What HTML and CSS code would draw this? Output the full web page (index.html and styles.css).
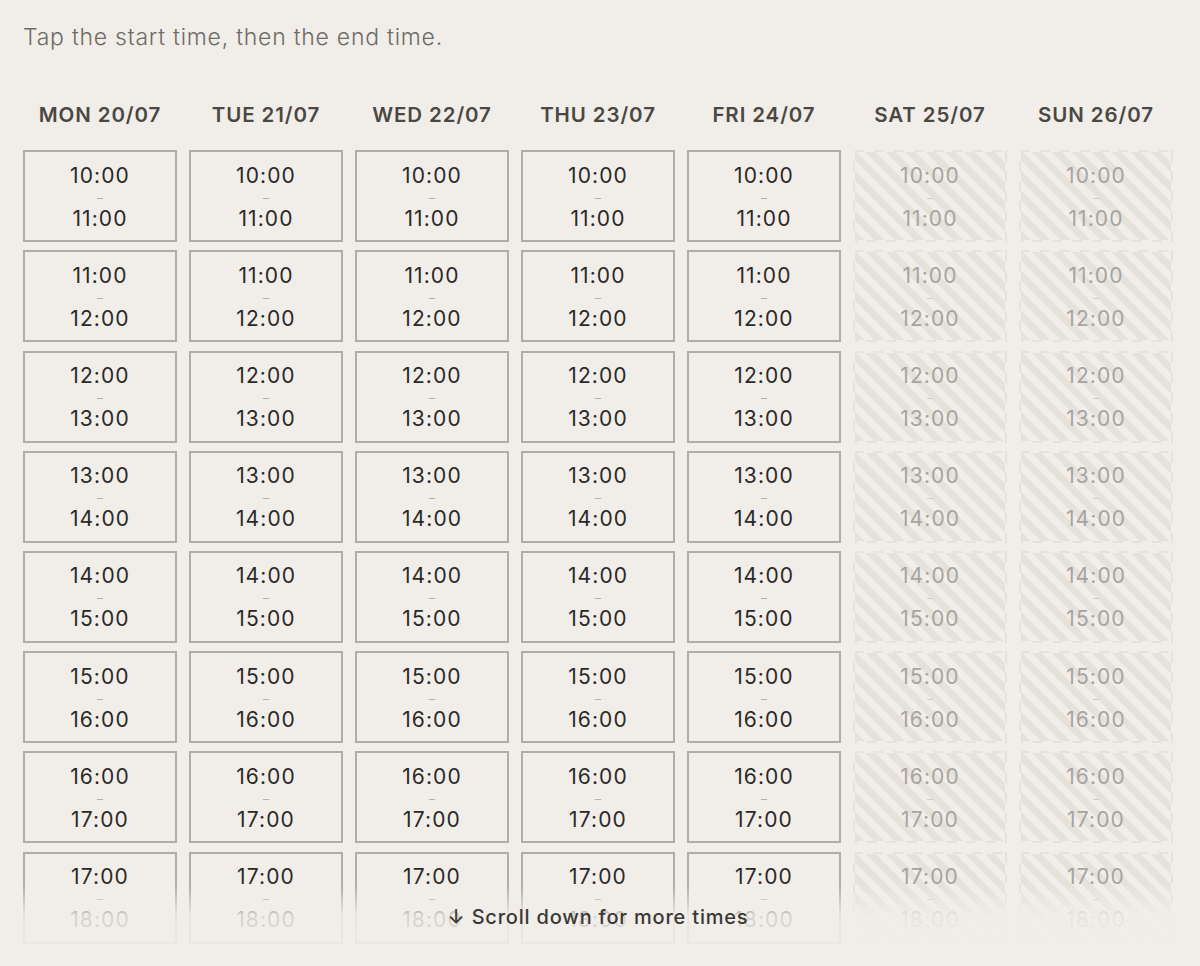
FILE: index.html
```html
<!DOCTYPE html>
<html lang="en">
<head>
<meta charset="utf-8">
<link rel="stylesheet" href="styles.css">
</head>
<body>
<main class="page">
  <p class="hint">Tap the start time, then the end time.</p>
  <section class="picker">
    <div class="grid" id="grid"></div>
    <div class="fade">
      <span class="more">↓ Scroll down for more times</span>
    </div>
  </section>
</main>
<script src="app.js"></script>
</body>
</html>
```
FILE: styles.css
```css
* { box-sizing: border-box; }
html, body { margin: 0; padding: 0; }
body {
  background: #f1eee9;
  font-family: "Inter", "Noto Sans", sans-serif;
  width: 1200px;
  height: 966px;
  overflow: hidden;
}
.page {
  padding: 22px 28px 0 23px;
}
.hint {
  margin: 0;
  font-size: 23px;
  line-height: 30px;
  font-weight: 300;
  color: #6e6b67;
  letter-spacing: 0.75px;
}
.picker {
  position: relative;
  margin-top: 49px;
}
.grid {
  display: grid;
  grid-template-columns: repeat(7, 154px);
  grid-template-rows: 41px;
  grid-auto-rows: 92px;
  column-gap: 12px;
  row-gap: 8.2px;
}
.head {
  height: 26px;
  display: flex;
  align-items: center;
  justify-content: center;
  font-size: 20.5px;
  font-weight: 600;
  color: #4b4844;
  letter-spacing: 0.9px;
}
.slot {
  border: 2px solid #b0ada8;
  display: flex;
  flex-direction: column;
  align-items: center;
  justify-content: center;
  padding-top: 2px;
  color: #2b2927;
}
.slot .t {
  font-size: 21px;
  line-height: 22px;
  letter-spacing: 1.1px;
}
.slot .d {
  font-size: 12px;
  line-height: 21px;
  height: 21px;
  color: #b4b0aa;
}
.slot.off {
  border-color: transparent;
  color: #a7a4a0;
  background: repeating-linear-gradient(45deg, #e5e1db 0 7px, #f1eee9 7px 14px);
}
.slot.off .d { color: #cfcbc5; }
.fade {
  position: absolute;
  left: -23px;
  right: -28px;
  bottom: -30px;
  height: 95px;
  background: linear-gradient(to bottom, rgba(241,238,233,0) 0%, rgba(241,238,233,0.05) 9%, rgba(241,238,233,0.86) 38%, rgba(241,238,233,0.9) 68%, #f1eee9 100%);
  display: flex;
  justify-content: center;
  padding-top: 26px;
}
.more {
  font-size: 20px;
  line-height: 24px;
  color: #3b3835;
  font-weight: 500;
  letter-spacing: 0.8px;
  margin-left: -4px;
}
```
FILE: app.js
```js
(function () {
  var days = ["MON 20/07","TUE 21/07","WED 22/07","THU 23/07","FRI 24/07","SAT 25/07","SUN 26/07"];
  var grid = document.getElementById("grid");
  var html = "";
  days.forEach(function (d) { html += '<div class="head">' + d + '</div>'; });
  for (var h = 10; h < 18; h++) {
    for (var c = 0; c < 7; c++) {
      var off = c >= 5 ? " off" : "";
      html += '<div class="slot' + off + '"><span class="t">' + h + ':00</span><span class="d">–</span><span class="t">' + (h + 1) + ':00</span></div>';
    }
  }
  grid.innerHTML = html;
})();
```
